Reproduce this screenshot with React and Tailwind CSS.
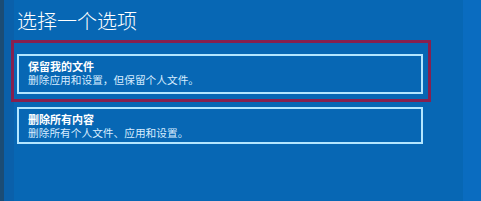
export default function App() {
  const font = { fontFamily: '"Noto Sans CJK SC", "Noto Sans", sans-serif' };
  return (
    <div className="w-[481px] h-[201px] flex bg-[#0767b4] overflow-hidden" style={font}>
      <div className="w-[4px] h-full bg-[#1b4c75]" />
      <div className="w-[10px] h-full bg-[#0a60aa]" />
      <div className="relative flex-1 flex flex-col pl-[3px] pt-[7px]">
        <h1 className="text-[20px] leading-[28px] font-light text-white tracking-[0px]">选择一个选项</h1>
        <div className="mt-[19px] w-[406px] flex flex-col gap-[13px]">
          <div className="border-2 border-[#b3e6ff] pl-[9px] pt-[3px] pb-[5px]">
            <div className="text-[11px] leading-[14px] font-bold text-white">保留我的文件</div>
            <div className="text-[10.7px] leading-[14px] text-[#d6ecff]">删除应用和设置，但保留个人文件。</div>
          </div>
          <div className="border-2 border-[#b3e6ff] pl-[9px] pt-[3px] pb-[2px]">
            <div className="text-[11px] leading-[14px] font-bold text-white">删除所有内容</div>
            <div className="text-[10.7px] leading-[14px] text-[#d6ecff]">删除所有个人文件、应用和设置。</div>
          </div>
        </div>
        <div className="absolute left-[-3px] top-[40px] w-[420px] h-[62px] border-[3px] border-[#86204f] pointer-events-none" />
      </div>
      <div className="w-[18px] h-full bg-[#0a6cc0]" />
    </div>
  );
}
